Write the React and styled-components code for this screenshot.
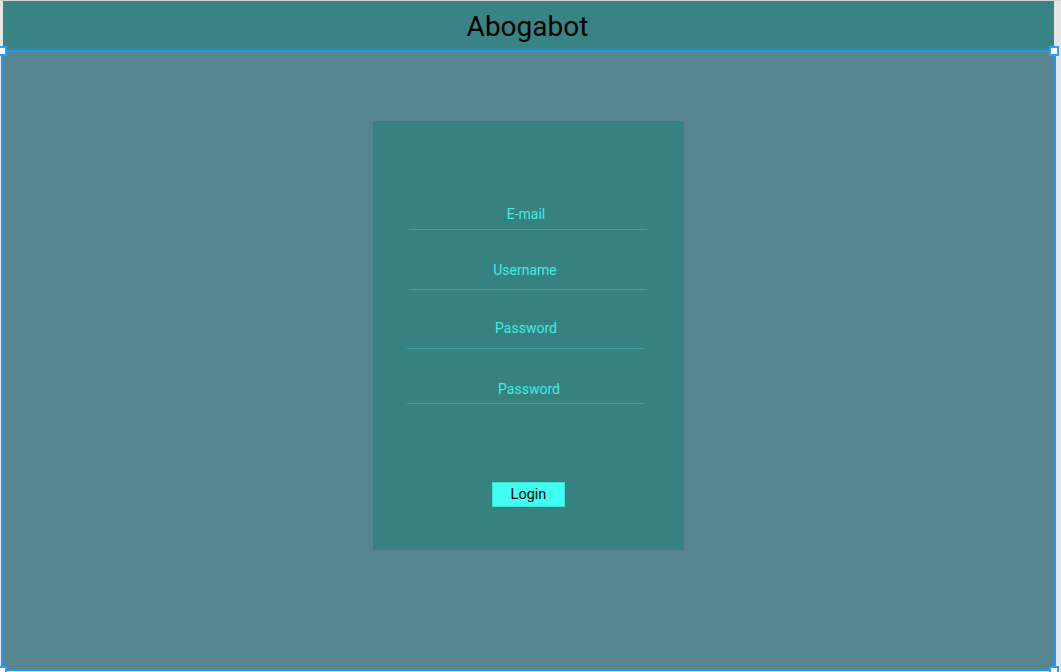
import React from 'react';
import styled, { createGlobalStyle } from 'styled-components';

const GlobalStyle = createGlobalStyle`
    html, body {
        margin: 0;
        padding: 0;
        background: #e6e6e6;
        font-family: Roboto, "Liberation Sans", sans-serif;
    }
`;

const Page = styled.div`
    width: 1061px;
    height: 672px;
    overflow: hidden;
    border-top: 1px solid #d2d2d2;
    box-sizing: border-box;
`;

const Header = styled.header`
    margin-left: 3px;
    width: 1051px;
    height: 49px;
    background: #388383;
    display: flex;
    align-items: center;
    justify-content: center;
`;

const Title = styled.h1`
    margin: 0;
    font-size: 28px;
    font-weight: 400;
    color: #000;
    transform: translate(-1px, 1px);
`;

const Canvas = styled.main`
    position: relative;
    margin-left: 1px;
    width: 1055px;
    height: 621px;
    box-sizing: border-box;
    border: 2px solid #2196f3;
    background: #56858f;
    display: flex;
    justify-content: center;
    padding-top: 69px;
`;

const Handle = styled.span`
    position: absolute;
    width: 6px;
    height: 6px;
    background: #fff;
    border: 2px solid #2ea0f5;
    ${p => (p.top ? 'top: -6px;' : 'bottom: -7px;')}
    ${p => (p.left ? 'left: -6px;' : 'right: -5px;')}
`;

const Card = styled.form`
    width: 311px;
    height: 429px;
    background: #368280;
    display: flex;
    flex-direction: column;
    padding-top: 85px;
    box-sizing: border-box;
`;

const Field = styled.div`
    margin-top: ${p => p.top}px;
    margin-left: ${p => p.left}px;
    width: 238px;
    padding-bottom: ${p => p.pad}px;
    border-bottom: 1px solid #3ba39e;
    text-align: center;
`;

const Label = styled.span`
    display: block;
    font-size: 14px;
    line-height: 16px;
    color: #44ece2;
    transform: translateX(${p => p.shift || 0}px);
`;

const LoginButton = styled.button`
    align-self: center;
    margin-top: 78px;
    width: 73px;
    height: 25px;
    background: #40fff0;
    border: 1px solid #3ee0d6;
    font-family: Roboto, "Liberation Sans", sans-serif;
    font-size: 14.5px;
    color: #000;
    padding: 0;
`;

const fields = [
    { label: 'E-mail', top: 0, left: 36, pad: 7, shift: -2 },
    { label: 'Username', top: 32, left: 36, pad: 11, shift: -3 },
    { label: 'Password', top: 30, left: 34, pad: 12, shift: 0 },
    { label: 'Password', top: 32, left: 34, pad: 6, shift: 3 },
];

export default function App() {
    return (
        <Page>
            <GlobalStyle />
            <Header>
                <Title>Abogabot</Title>
            </Header>
            <Canvas>
                <Handle top left />
                <Handle top />
                <Handle left />
                <Handle />
                <Card onSubmit={e => e.preventDefault()}>
                    {fields.map((f, i) => (
                        <Field key={i} top={f.top} left={f.left} pad={f.pad}>
                            <Label shift={f.shift}>{f.label}</Label>
                        </Field>
                    ))}
                    <LoginButton type="submit">Login</LoginButton>
                </Card>
            </Canvas>
        </Page>
    );
}
